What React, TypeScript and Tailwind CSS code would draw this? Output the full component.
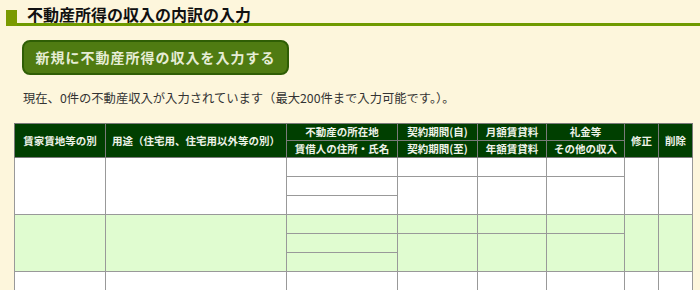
import React from 'react';

const jp = { fontFamily: '"Noto Sans CJK JP", "Noto Sans", sans-serif' };

const th = 'border border-[#7a7a7a] bg-[#003f00] text-[#eef2e8] text-[10.5px] font-bold text-center align-middle p-0 leading-none';
const td = 'border border-[#999] p-0';

const Record = ({ bg }: { bg: string }) => (
  <>
    <tr className="h-[19px]">
      <td rowSpan={3} className={`${td} ${bg}`} />
      <td rowSpan={3} className={`${td} ${bg}`} />
      <td className={`${td} ${bg}`} />
      <td className={`${td} ${bg}`} />
      <td className={`${td} ${bg}`} />
      <td className={`${td} ${bg}`} />
      <td rowSpan={3} className={`${td} ${bg}`} />
      <td rowSpan={3} className={`${td} ${bg}`} />
    </tr>
    <tr className="h-[19px]">
      <td className={`${td} ${bg}`} />
      <td rowSpan={2} className={`${td} ${bg}`} />
      <td rowSpan={2} className={`${td} ${bg}`} />
      <td rowSpan={2} className={`${td} ${bg}`} />
    </tr>
    <tr className="h-[19px]">
      <td className={`${td} ${bg}`} />
    </tr>
  </>
);

export default function App() {
  return (
    <div className="w-[700px] h-[290px] overflow-hidden bg-[#fdf6dc]" style={jp}>
      {/* Title */}
      <div className="pt-[7px] pl-[6px]">
        <div className="flex items-end border-b-[3px] border-[#6f9a00] h-[19px]">
          <div className="w-[11px] h-[16px] bg-[#7a9a00] mb-[-3px]" />
          <h1 className="ml-[10px] text-[16px] font-bold text-[#111] leading-none mb-[1px]">
            不動産所得の収入の内訳の入力
          </h1>
        </div>
      </div>

      {/* Button */}
      <div className="pl-[22px] pt-[14px]">
        <button className="w-[267px] h-[35px] rounded-[8px] border-2 border-[#2f5e05] bg-[#4f7b12] text-[#e6edd6] text-[14px] font-bold tracking-[1px]">
          新規に不動産所得の収入を入力する
        </button>
      </div>

      {/* Message */}
      <p className="pl-[23px] pt-[17px] text-[12.3px] text-[#333] leading-none">
        現在、0件の不動産収入が入力されています（最大200件まで入力可能です。）。
      </p>

      {/* Table */}
      <div className="pl-[14px] pt-[19px]">
        <table className="border-collapse table-fixed w-[678px]">
          <colgroup>
            <col className="w-[91px]" />
            <col className="w-[181px]" />
            <col className="w-[111px]" />
            <col className="w-[80px]" />
            <col className="w-[69px]" />
            <col className="w-[78px]" />
            <col className="w-[34px]" />
            <col className="w-[34px]" />
          </colgroup>
          <thead>
            <tr className="h-[17px]">
              <th rowSpan={2} className={th}>賃家賃地等の別</th>
              <th rowSpan={2} className={th}>用途（住宅用、住宅用以外等の別）</th>
              <th className={th}>不動産の所在地</th>
              <th className={th}>契約期間(自)</th>
              <th className={th}>月額賃貸料</th>
              <th className={th}>礼金等</th>
              <th rowSpan={2} className={th}>修正</th>
              <th rowSpan={2} className={th}>削除</th>
            </tr>
            <tr className="h-[17px]">
              <th className={th}>賃借人の住所・氏名</th>
              <th className={th}>契約期間(至)</th>
              <th className={th}>年額賃貸料</th>
              <th className={th}>その他の収入</th>
            </tr>
          </thead>
          <tbody>
            <Record bg="bg-white" />
            <Record bg="bg-[#e0fcd0]" />
            <Record bg="bg-white" />
          </tbody>
        </table>
      </div>
    </div>
  );
}
